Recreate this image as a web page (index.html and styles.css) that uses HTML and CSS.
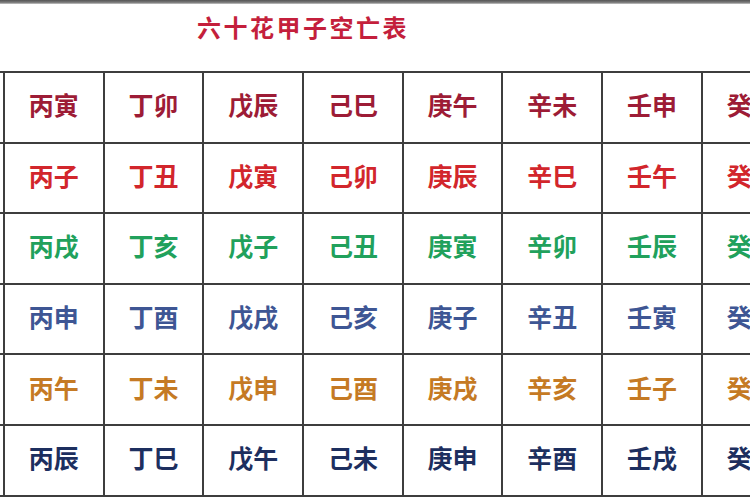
FILE: index.html
```html
<!DOCTYPE html>
<html lang="zh">
<head>
<meta charset="utf-8">
<title>六十花甲子空亡表</title>
<link rel="stylesheet" href="styles.css">
</head>
<body>
<div class="sheet">
  <div class="topbar"></div>
  <h1 class="title">六十花甲子空亡表</h1>
  <div class="grid">
    <div class="cell stub"></div>
    <div class="cell c1">丙寅</div><div class="cell c1">丁卯</div><div class="cell c1">戊辰</div><div class="cell c1">己巳</div><div class="cell c1">庚午</div><div class="cell c1">辛未</div><div class="cell c1">壬申</div><div class="cell c1">癸酉</div>
    <div class="cell stub"></div>
    <div class="cell c2">丙子</div><div class="cell c2">丁丑</div><div class="cell c2">戊寅</div><div class="cell c2">己卯</div><div class="cell c2">庚辰</div><div class="cell c2">辛巳</div><div class="cell c2">壬午</div><div class="cell c2">癸未</div>
    <div class="cell stub"></div>
    <div class="cell c3">丙戌</div><div class="cell c3">丁亥</div><div class="cell c3">戊子</div><div class="cell c3">己丑</div><div class="cell c3">庚寅</div><div class="cell c3">辛卯</div><div class="cell c3">壬辰</div><div class="cell c3">癸巳</div>
    <div class="cell stub"></div>
    <div class="cell c4">丙申</div><div class="cell c4">丁酉</div><div class="cell c4">戊戌</div><div class="cell c4">己亥</div><div class="cell c4">庚子</div><div class="cell c4">辛丑</div><div class="cell c4">壬寅</div><div class="cell c4">癸卯</div>
    <div class="cell stub"></div>
    <div class="cell c5">丙午</div><div class="cell c5">丁未</div><div class="cell c5">戊申</div><div class="cell c5">己酉</div><div class="cell c5">庚戌</div><div class="cell c5">辛亥</div><div class="cell c5">壬子</div><div class="cell c5">癸丑</div>
    <div class="cell stub"></div>
    <div class="cell c6">丙辰</div><div class="cell c6">丁巳</div><div class="cell c6">戊午</div><div class="cell c6">己未</div><div class="cell c6">庚申</div><div class="cell c6">辛酉</div><div class="cell c6">壬戌</div><div class="cell c6">癸亥</div>
  </div>
</div>
</body>
</html>
```
FILE: styles.css
```css
html, body {
  margin: 0;
  padding: 0;
  background: #ffffff;
}
body {
  font-family: "Noto Sans CJK SC", "Noto Sans", sans-serif;
  overflow: hidden;
}
.sheet {
  width: 750px;
  height: 500px;
  overflow: hidden;
  background: #ffffff;
}
.topbar {
  height: 4px;
  background: linear-gradient(#555555, #7a7a7a 60%, #c8c8c8);
}
.title {
  margin: 0;
  height: 67px;
  box-sizing: border-box;
  padding: 8px 0 0 197px;
  font-size: 24px;
  line-height: 30px;
  font-weight: 700;
  letter-spacing: 2.5px;
  color: #c41f3c;
  white-space: nowrap;
}
.grid {
  display: grid;
  grid-template-columns: 3px repeat(8, 97.7px);
  grid-auto-rows: 68.6px;
  gap: 2px;
  width: max-content;
  background: #3e3e3e;
  border-top: 2px solid #3e3e3e;
  border-bottom: 2px solid #3e3e3e;
}
.cell {
  background: #ffffff;
  display: flex;
  align-items: center;
  justify-content: center;
  padding-bottom: 6px;
  box-sizing: border-box;
  font-size: 25px;
  font-weight: 700;
  white-space: nowrap;
  overflow: hidden;
}
.c1 { color: #9d1c36; }
.c2 { color: #d2262c; }
.c3 { color: #21a15c; }
.c4 { color: #3e5694; }
.c5 { color: #c57a24; }
.c6 { color: #1d2f5f; }
```
